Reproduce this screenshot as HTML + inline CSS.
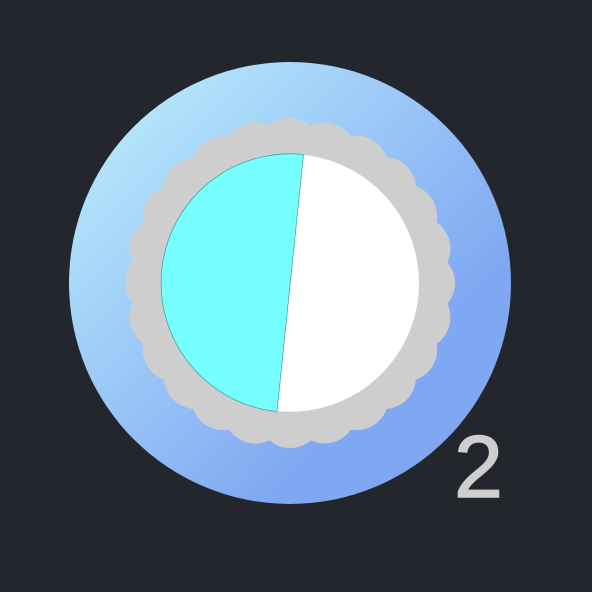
<!DOCTYPE html><html><head><style>html,body{margin:0;padding:0;background:#23272d;width:592px;height:592px;overflow:hidden}</style></head><body>
<svg width="592" height="592" viewBox="0 0 592 592" xmlns="http://www.w3.org/2000/svg">
<defs><linearGradient id="g" x1="0.15" y1="0.1" x2="0.75" y2="0.7"><stop offset="0" stop-color="#b4e6fb"/><stop offset="1" stop-color="#80a7f2"/></linearGradient></defs>
<rect width="592" height="592" fill="#23272d"/>
<circle cx="290" cy="283" r="221" fill="url(#g)"/>
<g fill="#cecece" id="sc"></g>
<circle cx="290" cy="283" r="140" fill="#cecece"/>
<circle cx="290.3" cy="283" r="128.7" fill="#fff"/>
<path d="M303.5 154.5 L277 411.5 A128.7 128.7 0 0 1 303.5 154.5 Z" fill="#77ffff" stroke="#2a8a8a" stroke-width="0.6"/>
<text x="478.5" y="497" font-family="Liberation Sans, sans-serif" font-size="88" fill="#cecece" stroke="#cecece" stroke-width="1.5" text-anchor="middle">2</text>
</svg>
<script>
var g=document.getElementById('sc'),s='';
for(var i=0;i<24;i++){var a=i*Math.PI/12;s+='<circle cx="'+(290+133*Math.sin(a))+'" cy="'+(283-133*Math.cos(a))+'" r="32"/>';}
g.innerHTML=s;
</script>
</body></html>
